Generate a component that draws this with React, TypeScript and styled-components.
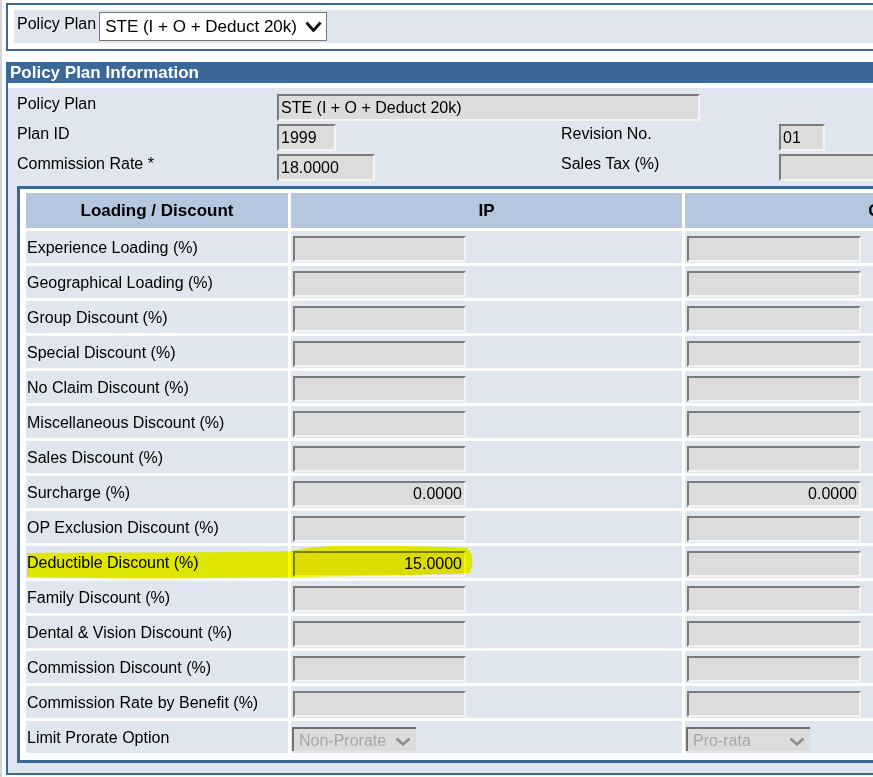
import React from "react";
import styled, { createGlobalStyle } from "styled-components";

const BLUE = "#3b6899";
const LIGHT = "#dfe6ef";
const HEAD = "#b5c7df";

const Global = createGlobalStyle`
  html, body { margin: 0; padding: 0; background: #fff; overflow: hidden; }
  body { font-family: "Liberation Sans", Arial, sans-serif; color: #000; }
`;

const Page = styled.div`
  width: 1400px;
  min-height: 777px;
  box-sizing: border-box;
  border-left: 2px solid #d4d4d4;
  padding: 3px 0 0 4px;
`;

const SelectBox = styled.div`
  width: 1300px;
  border: 2px solid ${BLUE};
  padding: 5px 6px 6px 6px;
`;

const SelectPanel = styled.div`
  background: ${LIGHT};
  height: 33px;
  box-sizing: border-box;
  display: flex;
  align-items: flex-start;
  gap: 3px;
  padding: 2px 3px;
`;

const Label = styled.span`
  font-size: 16px;
  line-height: 18px;
  white-space: nowrap;
`;

const TopLabel = styled(Label)`
  padding-top: 3px;
`;

const PlanSelect = styled.div`
  width: 228px;
  height: 29px;
  box-sizing: border-box;
  background: #fff;
  border: 1px solid #767676;
  display: flex;
  align-items: center;
  justify-content: space-between;
  padding: 0 4px 0 5px;
  font-size: 17px;
  white-space: nowrap;
`;

const InfoBox = styled.div`
  width: 1300px;
  margin-top: 11px;
  border: 2px solid ${BLUE};
  border-top: 0;
`;

const InfoHeader = styled.div`
  margin: 0 -2px;
  height: 21px;
  line-height: 21px;
  padding-left: 4px;
  background: ${BLUE};
  color: #fff;
  font-weight: bold;
  font-size: 17px;
`;

const InfoBody = styled.div`
  padding: 5px 0 10px 0;
  background: linear-gradient(#fff, #fff) top/100% 5px no-repeat, ${LIGHT};
`;

const FormGrid = styled.div`
  margin-left: 6px;
  background: ${LIGHT};
  display: grid;
  grid-template-columns: 260px 284px 218px 1fr;
  grid-auto-rows: 30px;
  padding: 4px 0 0 3px;
`;

const FormCell = styled.div`
  padding-top: 2px;
`;

const FormLabel = styled(Label)`
  display: block;
  padding-top: 3px;
`;

const Field = styled.div<{ $w: number; $right?: boolean; $h?: number }>`
  width: ${(p) => p.$w}px;
  height: ${(p) => p.$h ?? 27}px;
  box-sizing: border-box;
  background: #dcdcdc;
  border-style: solid;
  border-width: 2px;
  border-color: #7b7b7b #f4f4f4 #f4f4f4 #7b7b7b;
  font-size: 16px;
  line-height: ${(p) => (p.$h ?? 27) - 4}px;
  padding: 0 2px;
  text-align: ${(p) => (p.$right ? "right" : "left")};
  white-space: nowrap;
  overflow: hidden;
`;

const InnerBox = styled.div`
  margin: 4px 0 0 9px;
  border: 3px solid ${BLUE};
  background: #fff;
  padding: 4px 0 7px 6px;
`;

const Table = styled.div`
  position: relative;
  display: grid;
  grid-template-columns: 262px 391px 391px;
  grid-template-rows: 35px;
  grid-auto-rows: 32px;
  gap: 3px;
`;

const HeadCell = styled.div`
  background: ${HEAD};
  font-weight: bold;
  font-size: 17px;
  display: flex;
  align-items: center;
  justify-content: center;
`;

const LabelCell = styled.div`
  background: ${LIGHT};
  font-size: 16px;
  display: flex;
  align-items: center;
  padding: 1px 0 0 1px;
  white-space: nowrap;
`;

const InputCell = styled.div`
  background: ${LIGHT};
  padding: 5px 0 0 2px;
`;

const SelectCell = styled.div`
  background: ${LIGHT};
  padding: 6px 0 0 1px;
`;

const DisabledSelect = styled.div`
  width: 124px;
  height: 24px;
  box-sizing: border-box;
  background: #dcdcdc;
  border-top: 2px solid #6f6f6f;
  border-left: 2px solid #6f6f6f;
  display: flex;
  align-items: center;
  justify-content: space-between;
  padding: 2px 5px 0 5px;
  font-size: 16px;
  color: #a6a6a6;
  white-space: nowrap;
`;

const Highlight = styled.svg`
  position: absolute;
  left: 0;
  top: 0;
  pointer-events: none;
  mix-blend-mode: multiply;
`;

const rows: [string, string, string][] = [
  ["Experience Loading (%)", "", ""],
  ["Geographical Loading (%)", "", ""],
  ["Group Discount (%)", "", ""],
  ["Special Discount (%)", "", ""],
  ["No Claim Discount (%)", "", ""],
  ["Miscellaneous Discount (%)", "", ""],
  ["Sales Discount (%)", "", ""],
  ["Surcharge (%)", "0.0000", "0.0000"],
  ["OP Exclusion Discount (%)", "", ""],
  ["Deductible Discount (%)", "15.0000", ""],
  ["Family Discount (%)", "", ""],
  ["Dental & Vision Discount (%)", "", ""],
  ["Commission Discount (%)", "", ""],
  ["Commission Rate by Benefit (%)", "", ""],
];

const Chevron = ({ color, w = 16, h = 10, sw = 2.6 }: { color: string; w?: number; h?: number; sw?: number }) => (
  <svg width={w} height={h} viewBox={`0 0 ${w} ${h}`}>
    <polyline
      points={`1.5,1.5 ${w / 2},${h - 1.5} ${w - 1.5},1.5`}
      fill="none"
      stroke={color}
      strokeWidth={sw}
      strokeLinejoin="miter"
    />
  </svg>
);

export default function App() {
  return (
    <>
      <Global />
      <Page>
        <SelectBox>
          <SelectPanel>
            <TopLabel>Policy Plan</TopLabel>
            <PlanSelect>
              <span>STE (I + O + Deduct 20k)</span>
              <Chevron color="#111" w={17} h={11} sw={2.8} />
            </PlanSelect>
          </SelectPanel>
        </SelectBox>

        <InfoBox>
          <InfoHeader>Policy Plan Information</InfoHeader>
          <InfoBody>
            <FormGrid>
              <FormLabel>Policy Plan</FormLabel>
              <FormCell>
                <Field $w={423}>STE (I + O + Deduct 20k)</Field>
              </FormCell>
              <div />
              <div />
              <FormLabel>Plan ID</FormLabel>
              <FormCell>
                <Field $w={59}>1999</Field>
              </FormCell>
              <FormLabel>Revision No.</FormLabel>
              <FormCell>
                <Field $w={46}>01</Field>
              </FormCell>
              <FormLabel>Commission Rate *</FormLabel>
              <FormCell>
                <Field $w={98}>18.0000</Field>
              </FormCell>
              <FormLabel>Sales Tax (%)</FormLabel>
              <FormCell>
                <Field $w={98}></Field>
              </FormCell>
            </FormGrid>

            <InnerBox>
              <Table>
                <HeadCell>Loading / Discount</HeadCell>
                <HeadCell>IP</HeadCell>
                <HeadCell>OP</HeadCell>
                {rows.map(([label, ip, op]) => (
                  <React.Fragment key={label}>
                    <LabelCell>{label}</LabelCell>
                    <InputCell>
                      <Field $w={173} $h={26} $right>
                        {ip}
                      </Field>
                    </InputCell>
                    <InputCell>
                      <Field $w={174} $h={26} $right>
                        {op}
                      </Field>
                    </InputCell>
                  </React.Fragment>
                ))}
                <LabelCell>Limit Prorate Option</LabelCell>
                <SelectCell>
                  <DisabledSelect>
                    <span>Non-Prorate</span>
                    <Chevron color="#8a8a8a" w={16} h={9} sw={2.4} />
                  </DisabledSelect>
                </SelectCell>
                <SelectCell>
                  <DisabledSelect>
                    <span>Pro-rata</span>
                    <Chevron color="#8a8a8a" w={16} h={9} sw={2.4} />
                  </DisabledSelect>
                </SelectCell>

                <Highlight width="520" height="420">
                  <g transform="translate(-26,-193)">
                    <path
                      d="M27 553 C 120 552, 220 553, 292 551 C 305 548, 320 546, 345 546 C 400 546, 440 546, 466 548 C 474 551, 474 568, 469 573 C 420 575, 360 576, 300 577 C 200 579, 100 579, 27 577 Z"
                      fill="#ffff00"
                    />
                  </g>
                </Highlight>
              </Table>
            </InnerBox>
          </InfoBody>
        </InfoBox>
      </Page>
    </>
  );
}
